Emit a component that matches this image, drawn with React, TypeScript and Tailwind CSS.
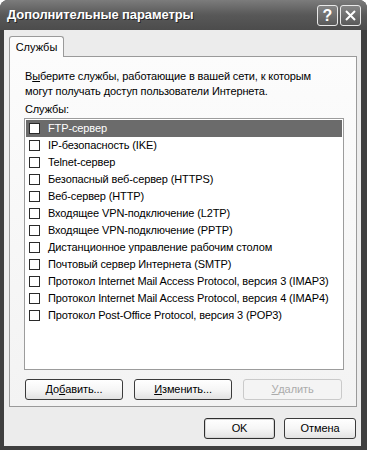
import React from 'react';

const services = [
  'FTP-сервер',
  'IP-безопасность (IKE)',
  'Telnet-сервер',
  'Безопасный веб-сервер (HTTPS)',
  'Веб-сервер (HTTP)',
  'Входящее VPN-подключение (L2TP)',
  'Входящее VPN-подключение (PPTP)',
  'Дистанционное управление рабочим столом',
  'Почтовый сервер Интернета (SMTP)',
  'Протокол Internet Mail Access Protocol, версия 3 (IMAP3)',
  'Протокол Internet Mail Access Protocol, версия 4 (IMAP4)',
  'Протокол Post-Office Protocol, версия 3 (POP3)',
];

const font = { fontFamily: '"Liberation Sans", Arial, sans-serif' };

const Button = ({ children, className = '', disabled = false }: { children: React.ReactNode; className?: string; disabled?: boolean }) => (
  <div
    className={`flex items-center justify-center h-[21px] rounded-[3px] border text-[11px] tracking-[-0.1px] ${
      disabled
        ? 'border-[#cacaca] bg-[#f4f4f4] text-[#ababab]'
        : 'border-[#3b3b3b] bg-gradient-to-b from-[#ffffff] via-[#f6f6f6] to-[#e2e2e2] text-black'
    } ${className}`}
  >
    {children}
  </div>
);

const App = () => {
  return (
    <div className="w-[367px] h-[450px] bg-[#3f3f3f] rounded-t-[8px] flex flex-col select-none" style={font}>
      {/* title bar */}
      <div className="h-[30px] flex items-center rounded-t-[8px] bg-gradient-to-b from-[#7c7c7c] via-[#585858] to-[#4c4c4c] pl-[7px] pr-[6px]">
        <span className="text-white font-bold text-[13px] tracking-[-0.1px] [text-shadow:1px_1px_#262626] flex-1">
          Дополнительные параметры
        </span>
        <div className="flex gap-[2px] mt-[1px]">
          <div className="w-[21px] h-[21px] rounded-[3px] border border-[#e8e8e8] bg-gradient-to-b from-[#858585] to-[#5a5a5a] flex items-center justify-center text-white font-bold text-[16px] leading-none">
            ?
          </div>
          <div className="w-[21px] h-[21px] rounded-[3px] border border-[#e8e8e8] bg-gradient-to-b from-[#858585] to-[#5a5a5a] flex items-center justify-center">
            <svg width="11" height="11" viewBox="0 0 11 11">
              <path d="M1 1 L10 10 M10 1 L1 10" stroke="white" strokeWidth="2" />
            </svg>
          </div>
        </div>
      </div>

      {/* client area */}
      <div className="flex-1 ml-[4px] mr-[6px] mb-[4px] bg-[#ececec] flex flex-col pt-[6px]">
        <div className="ml-[5px] w-[55px] h-[21px] -mb-[1px] relative z-10 rounded-t-[3px] border border-b-0 border-[#9a9a9a] bg-[#fcfcfc] flex items-center justify-center text-[11px] text-black">
          Службы
        </div>
        <div className="ml-[5px] w-[348px] h-[351px] border border-[#9a9a9a] bg-gradient-to-b from-[#fcfcfc] to-[#f3f3f3] pl-[14px] pt-[12px] flex flex-col text-[11px] tracking-[-0.12px]">
          <div className="leading-[15px] text-black pl-[1px]">
            В<u>ы</u>берите службы, работающие в вашей сети, к которым<br />
            могут получать доступ пользователи Интернета.
          </div>
          <div className="leading-[13px] text-black pl-[1px] mt-[4px]">Службы:</div>
          <div className="mt-[2px] w-[320px] h-[252px] border border-[#9c9c9c] bg-white p-[1px]">
            {services.map((s, i) => (
              <div
                key={s}
                className={`h-[17px] flex items-center whitespace-nowrap ${
                  i === 0 ? 'bg-[#6b6b6b] text-white' : 'text-black'
                }`}
              >
                <div className="ml-[3px] w-[11px] h-[11px] border border-[#2a2a2a] bg-white shrink-0" />
                <span className="ml-[8px]">{s}</span>
              </div>
            ))}
          </div>
          <div className="mt-[9px] ml-[1px] flex gap-[11px]">
            <Button className="w-[98px]">
              До<u>б</u>авить...
            </Button>
            <Button className="w-[98px]">
              <u>И</u>зменить...
            </Button>
            <Button className="w-[99px]" disabled>
              <u>У</u>далить
            </Button>
          </div>
        </div>
        <div className="mt-[11px] flex justify-end gap-[9px] mr-[5px]">
          <Button className="w-[71px] !border-[#2e2e2e] shadow-[inset_0_0_0_1px_#d6d6d6]">OK</Button>
          <Button className="w-[72px]">Отмена</Button>
        </div>
      </div>
    </div>
  );
};

export default App;
